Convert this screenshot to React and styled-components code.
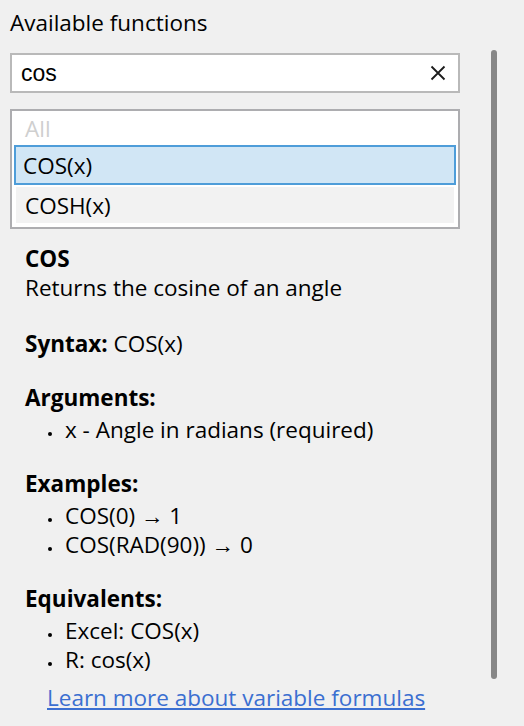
import React, { useState } from 'react';
import styled, { createGlobalStyle } from 'styled-components';

const GlobalStyle = createGlobalStyle`
  html, body {
    margin: 0;
    padding: 0;
    background: #f0f0f0;
  }
  body {
    font-family: "Open Sans", "Noto Sans", sans-serif;
    color: #000;
  }
`;

const Page = styled.div`
  width: 524px;
  height: 726px;
  overflow: hidden;
  background: #f0f0f0;
  padding-left: 10px;
  box-sizing: border-box;
`;

const Header = styled.div`
  font-size: 22.5px;
  line-height: 30px;
  padding-top: 8px;
  height: 50px;
  box-sizing: border-box;
`;

const Body = styled.div`
  display: flex;
  align-items: flex-start;
`;

const Column = styled.div`
  width: 450px;
  padding-top: 3px;
`;

const Thumb = styled.div`
  width: 6px;
  height: 629px;
  margin-left: 31px;
  border-radius: 3px;
  background: #878787;
`;

const SearchBox = styled.div`
  display: flex;
  align-items: center;
  height: 40px;
  box-sizing: border-box;
  border: 2px solid #b9b9b9;
  background: #fff;
  padding: 0 12px 0 9px;
`;

const SearchInput = styled.input`
  flex: 1;
  border: none;
  outline: none;
  background: transparent;
  padding: 0;
  font-family: "Liberation Sans", Arial, sans-serif;
  font-size: 23px;
  color: #000;
`;

const ClearButton = styled.button`
  display: flex;
  align-items: center;
  justify-content: center;
  border: none;
  background: none;
  padding: 0;
  width: 16px;
  height: 16px;
  cursor: pointer;
`;

const ListBox = styled.div`
  margin-top: 16px;
  height: 120px;
  box-sizing: border-box;
  border: 2px solid #adadb0;
  background: #fff;
  padding: 0 4px;
`;

const Option = styled.div`
  height: ${(p) => p.$h}px;
  box-sizing: border-box;
  display: flex;
  align-items: center;
  padding-left: ${(p) => (p.$selected ? 7 : 9)}px;
  margin: ${(p) => (p.$selected ? '0 -2px' : '0')};
  font-size: 22.5px;
  color: ${(p) => (p.$placeholder ? '#cfcfcf' : '#000')};
  background: ${(p) => (p.$selected ? '#d1e6f5' : p.$placeholder ? '#fff' : '#f2f2f2')};
  border: ${(p) => (p.$selected ? '2px solid #4e9dd9' : 'none')};
  margin-bottom: ${(p) => (p.$selected ? 2 : 0)}px;
`;

const Details = styled.div`
  padding-left: 15px;
  padding-top: 15px;
  font-size: 22.5px;
  line-height: 29px;
`;

const Title = styled.div`
  font-weight: 700;
`;

const Section = styled.div`
  margin-top: ${(p) => p.$gap || 25}px;
`;

const Label = styled.span`
  font-weight: 700;
`;

const Heading = styled.div`
  font-weight: 700;
  margin-bottom: 3px;
`;

const Items = styled.ul`
  list-style: none;
  margin: 0;
  padding: 0 0 0 23px;
`;

const Item = styled.li`
  &::before {
    content: "";
    display: inline-block;
    width: 4px;
    height: 4px;
    border-radius: 50%;
    background: #000;
    vertical-align: 2px;
    margin-right: 13px;
  }
`;

const Link = styled.a`
  display: inline-block;
  margin-top: 9px;
  margin-left: 22px;
  color: #3b6fd1;
  text-decoration: underline;
  cursor: pointer;
`;

const XIcon = () => (
  <svg width="16" height="16" viewBox="0 0 16 16">
    <path d="M1.5 1.5 L14.5 14.5 M14.5 1.5 L1.5 14.5" stroke="#1b1b1b" strokeWidth="1.8" fill="none" />
  </svg>
);

const App = () => {
  const [query, setQuery] = useState('cos');

  return (
    <>
      <GlobalStyle />
      <Page>
        <Header>Available functions</Header>
        <Body>
          <Column>
            <SearchBox>
              <SearchInput value={query} onChange={(e) => setQuery(e.target.value)} />
              <ClearButton onClick={() => setQuery('')}>
                <XIcon />
              </ClearButton>
            </SearchBox>
            <ListBox>
              <Option $h={34} $placeholder>All</Option>
              <Option $h={40} $selected>COS(x)</Option>
              <Option $h={36}>COSH(x)</Option>
            </ListBox>
            <Details>
              <Title>COS</Title>
              <div>Returns the cosine of an angle</div>
              <Section $gap={27}>
                <Label>Syntax:</Label> COS(x)
              </Section>
              <Section>
                <Heading>Arguments:</Heading>
                <Items>
                  <Item>x - Angle in radians (required)</Item>
                </Items>
              </Section>
              <Section>
                <Heading>Examples:</Heading>
                <Items>
                  <Item>COS(0) → 1</Item>
                  <Item>COS(RAD(90)) → 0</Item>
                </Items>
              </Section>
              <Section>
                <Heading>Equivalents:</Heading>
                <Items>
                  <Item>Excel: COS(x)</Item>
                  <Item>R: cos(x)</Item>
                </Items>
              </Section>
              <Link>Learn more about variable formulas</Link>
            </Details>
          </Column>
          <Thumb />
        </Body>
      </Page>
    </>
  );
};

export default App;
